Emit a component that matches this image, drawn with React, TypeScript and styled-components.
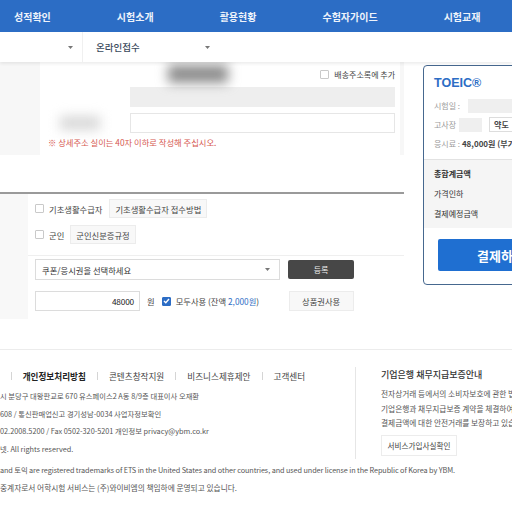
import React from 'react'
import styled, { createGlobalStyle } from 'styled-components'

const GlobalStyle = createGlobalStyle`
    html, body { margin: 0; padding: 0; background: #fff; }
    body { font-family: "Noto Sans CJK KR", "Noto Sans", sans-serif; color: #333; }
    * { box-sizing: border-box; }
`

const Page = styled.div`
    width: 512px;
    height: 512px;
    overflow: hidden;
    background: #fff;
`

/* top navigation */
const TopNav = styled.nav`
    height: 32px;
    background: #2c6dc5;
    display: flex;
    align-items: center;
    padding-left: 14px;
    gap: 66px;
`

const NavItem = styled.div`
    color: #eef3fb;
    font-size: 10px;
    font-weight: 700;
    white-space: nowrap;
`

const SubNav = styled.div`
    height: 30px;
    display: flex;
    align-items: stretch;
    background: #fff;
    box-shadow: 0 2px 3px rgba(0, 0, 0, 0.07);
    position: relative;
    z-index: 1;
`

const SubSelect = styled.div<{ $w: number }>`
    width: ${p => p.$w}px;
    display: flex;
    align-items: center;
    justify-content: space-between;
    padding: 0 9px 0 13px;
    border-left: 1px solid #f0f0f0;
    font-size: 9.5px;
    font-weight: 500;
    color: #3a4a5c;
    &:first-child { border-left: none; }
`

const Arrow = () => (
	<svg width="5" height="3" viewBox="0 0 5 3"><path d="M0 0h5L2.5 3z" fill="#777" /></svg>
)

/* main area */
const Main = styled.div`
    display: flex;
    height: 287px;
`

const LeftCol = styled.div`
    width: 404px;
    flex-shrink: 0;
    display: flex;
    flex-direction: column;
`

const AddressArea = styled.div`
    height: 93px;
    display: flex;
    background: #f7f7f7;
`

const AddressPanel = styled.div`
    margin-left: 40px;
    width: 360px;
    background: #fff;
    padding-right: 5px;
    display: flex;
    flex-direction: column;
`

const PanelRow = styled.div<{ $h: number; $mt?: number }>`
    height: ${p => p.$h}px;
    margin-top: ${p => p.$mt || 0}px;
    display: flex;
    align-items: center;
`

const Blur = styled.div<{ $w: number; $h: number; $c: string; $ml?: number }>`
    width: ${p => p.$w}px;
    height: ${p => p.$h}px;
    margin-left: ${p => p.$ml || 0}px;
    background: ${p => p.$c};
    filter: blur(6px);
    flex-shrink: 0;
`

const LabelCol = styled.div`
    width: 90px;
    height: 100%;
    display: flex;
    align-items: center;
`

const GreyBar = styled.div`
    flex: 1;
    height: 100%;
    background: #eeeeee;
`

const TextInput = styled.div`
    flex: 1;
    height: 100%;
    border: 1px solid #e6e6e6;
    background: #fff;
`

const CheckLabel = styled.label`
    margin-left: auto;
    display: flex;
    align-items: center;
    gap: 5px;
    font-size: 8px;
    color: #444;
`

const Box = styled.span<{ $checked?: boolean }>`
    width: 9px;
    height: 9px;
    border: 1px solid ${p => p.$checked ? '#2c6dc5' : '#c9c9c9'};
    background: ${p => p.$checked ? '#2c6dc5' : '#fff'};
    border-radius: 1px;
    display: inline-flex;
    align-items: center;
    justify-content: center;
    flex-shrink: 0;
`

const Notice = styled.div`
    margin-top: 4px;
    padding-left: 8px;
    font-size: 8.3px;
    line-height: 10px;
    color: #d6584f;
`

const Rule = styled.div`
    margin-top: 37px;
    height: 2px;
    background: #9a9a9a;
`

const FormArea = styled.div`
    flex: 1;
    display: flex;
`

const FormStrip = styled.div`
    width: 28px;
    background: #f8f8f8;
    height: 125px;
`

const FormBody = styled.div`
    flex: 1;
    padding-left: 7px;
    display: flex;
    flex-direction: column;
`

const FormRow = styled.div<{ $mt: number; $h: number }>`
    margin-top: ${p => p.$mt}px;
    height: ${p => p.$h}px;
    display: flex;
    align-items: center;
    font-size: 8.3px;
    color: #444;
`

const RowText = styled.span<{ $ml?: number; $w?: number }>`
    margin-left: ${p => p.$ml || 0}px;
    ${p => p.$w ? `width: ${p.$w}px;` : ''}
    white-space: nowrap;
`

const Price = styled.span`
    color: #2c6dc5;
`

const GhostButton = styled.div<{ $ml?: number; $w?: number }>`
    margin-left: ${p => p.$ml || 0}px;
    ${p => p.$w ? `width: ${p.$w}px;` : ''}
    height: 100%;
    padding: 0 5px;
    display: flex;
    align-items: center;
    justify-content: center;
    background: #f8f8f8;
    border: 1px solid #ececec;
    font-size: 8.3px;
    color: #444;
    white-space: nowrap;
`

const ThinRule = styled.div`
    margin-top: 11px;
    height: 1px;
    background: #efefef;
    margin-left: -7px;
`

const SelectBox = styled.div`
    width: 245px;
    height: 100%;
    border: 1px solid #dcdcdc;
    display: flex;
    align-items: center;
    justify-content: space-between;
    padding: 0 9px 0 6px;
    color: #333;
`

const DarkButton = styled.div`
    margin-left: 8px;
    width: 66px;
    height: 19px;
    background: #474747;
    border-radius: 2px;
    color: #eee;
    font-size: 8px;
    display: flex;
    align-items: center;
    justify-content: center;
`

const AmountInput = styled.div`
    width: 105px;
    height: 100%;
    border: 1px solid #dcdcdc;
    display: flex;
    align-items: center;
    justify-content: flex-end;
    padding-right: 5px;
    color: #222;
    letter-spacing: -0.2px;
`

/* order card */
const Card = styled.div`
    margin: 3px 0 0 19px;
    width: 130px;
    height: 220px;
    flex-shrink: 0;
    border: 1px solid #46688f;
    border-radius: 4px;
    display: flex;
    flex-direction: column;
    overflow: hidden;
`

const CardTitle = styled.div`
    margin: 9px 0 0 10px;
    font-size: 12.5px;
    line-height: 16px;
    font-weight: 700;
    color: #2c6dc5;
    font-family: "Liberation Sans", "Noto Sans CJK KR", sans-serif;
`

const InfoList = styled.div`
    margin-top: 5px;
    padding-left: 10px;
    display: flex;
    flex-direction: column;
`

const InfoRow = styled.div`
    height: 19px;
    display: flex;
    align-items: center;
    font-size: 8px;
    color: #9a9a9a;
    white-space: nowrap;
`

const Placeholder = styled.span<{ $w: number; $ml: number }>`
    width: ${p => p.$w}px;
    height: 14px;
    margin-left: ${p => p.$ml}px;
    background: #efefef;
`

const MapButton = styled.span`
    margin-left: 7px;
    height: 15px;
    padding: 0 4px;
    border: 1px solid #ddd;
    display: flex;
    align-items: center;
    color: #444;
    font-weight: 700;
`

const Strong = styled.b`
    color: #444;
    font-weight: 700;
`

const SumBox = styled.div`
    margin-top: 6px;
    border-top: 1px solid #e2e2e2;
    background: #f5f5f5;
    padding: 3px 0 5px 10px;
    display: flex;
    flex-direction: column;
`

const SumRow = styled.div<{ $bold?: boolean }>`
    height: 20px;
    display: flex;
    align-items: center;
    font-size: 8px;
    color: #333;
    font-weight: ${p => p.$bold ? 700 : 400};
`

const PayButton = styled.div`
    margin: 11px 0 0 14px;
    width: 126px;
    height: 32px;
    background: #1f6fd1;
    border-radius: 2px;
    color: #fff;
    font-size: 13px;
    font-weight: 700;
    display: flex;
    align-items: center;
    justify-content: center;
    flex-shrink: 0;
`

/* footer */
const Footer = styled.footer`
    border-top: 1px solid #ececec;
`

const FooterTop = styled.div`
    margin-top: 17px;
    display: flex;
    height: 92px;
`

const FooterLeft = styled.div`
    width: 355px;
    flex-shrink: 0;
    display: flex;
    flex-direction: column;
`

const LinkList = styled.div`
    margin: 3px 0 0 -32px;
    height: 12px;
    display: flex;
    align-items: center;
    gap: 11px;
    font-size: 8.6px;
    color: #444;
    white-space: nowrap;
`

const FooterLink = styled.span<{ $bold?: boolean }>`
    font-weight: ${p => p.$bold ? 700 : 400};
    color: ${p => p.$bold ? '#222' : '#444'};
`

const Sep = styled.span`
    width: 1px;
    height: 8px;
    background: #d5d5d5;
`

const AddressLines = styled.div`
    margin-top: 6px;
    font-size: 7.3px;
    line-height: 17.5px;
    color: #555;
    white-space: nowrap;
`

const FooterRight = styled.div`
    flex: 1;
    min-width: 0;
    border-left: 1px solid #e6e6e6;
    padding: 2px 0 0 25px;
    display: flex;
    flex-direction: column;
    white-space: nowrap;
`

const GuaranteeTitle = styled.div`
    font-size: 9px;
    line-height: 12px;
    font-weight: 500;
    color: #333;
`

const GuaranteeText = styled.div`
    margin-top: 6px;
    font-size: 7.7px;
    line-height: 14.5px;
    color: #555;
`

const ServiceButton = styled.div`
    margin-top: 4px;
    width: 76px;
    height: 21px;
    border: 1px solid #ececec;
    display: flex;
    align-items: center;
    justify-content: center;
    font-size: 7.6px;
    color: #444;
`

const BottomLines = styled.div`
    margin-top: 2px;
    line-height: 18px;
    color: #555;
    white-space: nowrap;
`

const BottomLine = styled.div<{ $latin?: boolean }>`
    font-size: ${p => p.$latin ? '7.3px' : '7.7px'};
    letter-spacing: ${p => p.$latin ? '-0.1px' : '0'};
`

const Check = () => (
	<svg width="7" height="6" viewBox="0 0 7 6"><path d="M1 3l1.8 1.8L6 1" stroke="#fff" strokeWidth="1.4" fill="none" /></svg>
)

const navItems = ['성적확인', '시험소개', '활용현황', '수험자가이드', '시험교재']

const App = () => {
	return (
		<>
			<GlobalStyle />
			<Page>
				<TopNav>
					{navItems.map(item => <NavItem key={item}>{item}</NavItem>)}
				</TopNav>
				<SubNav>
					<SubSelect $w={82}><span /><Arrow /></SubSelect>
					<SubSelect $w={137}><span>온라인접수</span><Arrow /></SubSelect>
				</SubNav>

				<Main>
					<LeftCol>
						<AddressArea>
							<AddressPanel>
								<PanelRow $h={24}>
									<Blur $w={60} $h={18} $c="#8d8d8d" $ml={128} />
									<CheckLabel><Box />배송주소록에 추가</CheckLabel>
								</PanelRow>
								<PanelRow $h={20} $mt={1}>
									<LabelCol />
									<GreyBar />
								</PanelRow>
								<PanelRow $h={20} $mt={6}>
									<LabelCol><Blur $w={40} $h={14} $c="#d8d8d8" $ml={20} /></LabelCol>
									<TextInput />
								</PanelRow>
								<Notice>※ 상세주소 실이는 40자 이하로 작성해 주십시오.</Notice>
							</AddressPanel>
						</AddressArea>
						<Rule />
						<FormArea>
							<FormStrip />
							<FormBody>
								<FormRow $mt={5} $h={19}>
									<Box />
									<RowText $ml={5}>기초생활수급자</RowText>
									<GhostButton $ml={7}>기초생활수급자 접수방법</GhostButton>
								</FormRow>
								<FormRow $mt={7} $h={19}>
									<Box />
									<RowText $ml={5}>군인</RowText>
									<GhostButton $ml={6}>군인신분증규정</GhostButton>
								</FormRow>
								<ThinRule />
								<FormRow $mt={3} $h={21}>
									<SelectBox>쿠폰/응시권을 선택하세요<Arrow /></SelectBox>
									<DarkButton>등록</DarkButton>
								</FormRow>
								<FormRow $mt={11} $h={20}>
									<AmountInput>48000</AmountInput>
									<RowText $ml={7}>원</RowText>
									<Box $checked style={{ marginLeft: 7 }}><Check /></Box>
									<RowText $ml={5} $w={113}>모두사용 (잔액 <Price>2,000원</Price>)</RowText>
									<GhostButton $w={65}>상품권사용</GhostButton>
								</FormRow>
							</FormBody>
						</FormArea>
					</LeftCol>

					<Card>
						<CardTitle>TOEIC®</CardTitle>
						<InfoList>
							<InfoRow>시험일 :<Placeholder $w={60} $ml={8} /></InfoRow>
							<InfoRow>고사장<Placeholder $w={23} $ml={3} /><MapButton>약도</MapButton></InfoRow>
							<InfoRow>응시료 :&nbsp;<Strong>48,000원 (부가세 포함)</Strong></InfoRow>
						</InfoList>
						<SumBox>
							<SumRow $bold>총합계금액</SumRow>
							<SumRow>가격인하</SumRow>
							<SumRow>결제예정금액</SumRow>
						</SumBox>
						<PayButton>결제하기</PayButton>
					</Card>
				</Main>

				<Footer>
					<FooterTop>
						<FooterLeft>
							<LinkList>
								<FooterLink>이용약관</FooterLink>
								<Sep />
								<FooterLink $bold>개인정보처리방침</FooterLink>
								<Sep />
								<FooterLink>콘텐츠창작지원</FooterLink>
								<Sep />
								<FooterLink>비즈니스제휴제안</FooterLink>
								<Sep />
								<FooterLink>고객센터</FooterLink>
							</LinkList>
							<AddressLines>
								<div>시 분당구 대왕판교로 670 유스페이스2 A동 8/9층 대표이사 오재환</div>
								<div>608 / 통신판매업신고 경기성남-0034 사업자정보확인</div>
								<div>02.2008.5200 / Fax 0502-320-5201 개인정보 privacy@ybm.co.kr</div>
								<div>넷. All rights reserved.</div>
							</AddressLines>
						</FooterLeft>
						<FooterRight>
							<GuaranteeTitle>기업은행 채무지급보증안내</GuaranteeTitle>
							<GuaranteeText>
								<div>전자상거래 등에서의 소비자보호에 관한 법률에 의거하여</div>
								<div>기업은행과 채무지급보증 계약을 체결하여</div>
								<div>결제금액에 대한 안전거래를 보장하고 있습니다.</div>
							</GuaranteeText>
							<ServiceButton>서비스가입사실확인</ServiceButton>
						</FooterRight>
					</FooterTop>
					<BottomLines>
						<BottomLine $latin>and 토익 are registered trademarks of ETS in the United States and other countries, and used under license in the Republic of Korea by YBM.</BottomLine>
						<BottomLine>중계자로서 어학시험 서비스는 (주)와이비엠의 책임하에 운영되고 있습니다.</BottomLine>
					</BottomLines>
				</Footer>
			</Page>
		</>
	)
}

export default App
